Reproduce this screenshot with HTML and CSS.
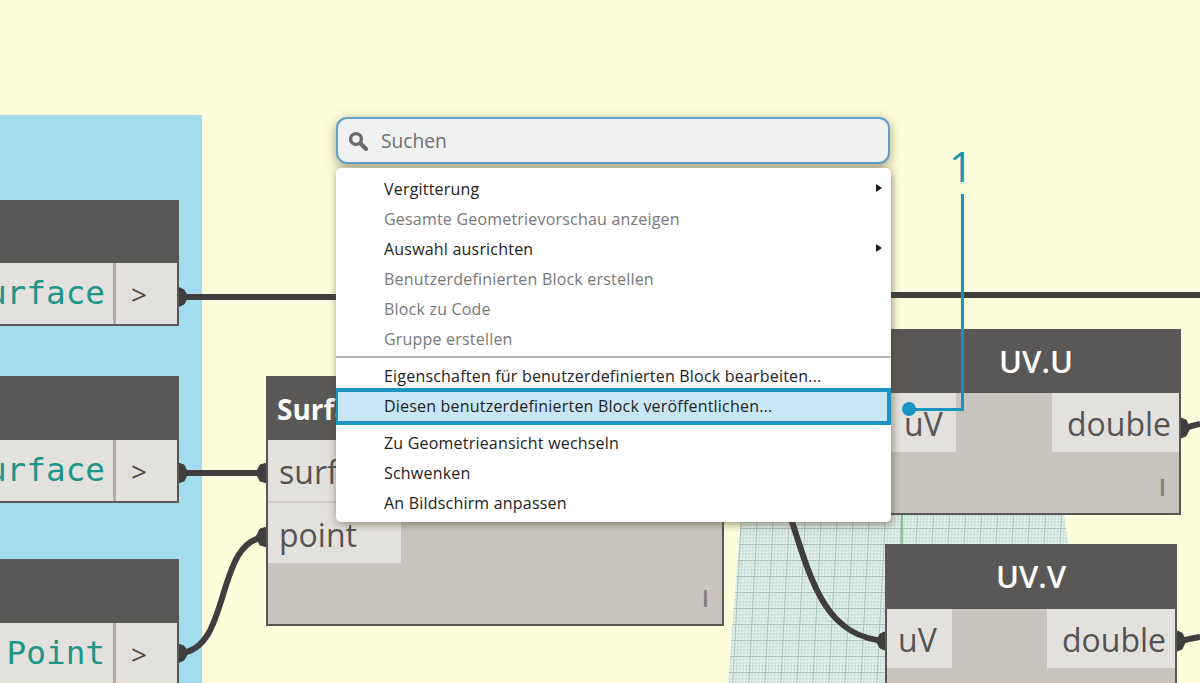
FILE: index.html
```html
<!DOCTYPE html>
<html lang="de">
<head>
<meta charset="utf-8">
<title>Block veröffentlichen</title>
<link rel="stylesheet" href="styles.css">
</head>
<body>
<main class="canvas">
  <div class="group"></div>

  <svg class="layer" width="1200" height="683" viewBox="0 0 1200 683" aria-hidden="true">
    <defs>
      <pattern id="fine" width="3.200" height="3.200" patternUnits="userSpaceOnUse">
        <rect width="3.200" height="3.200" fill="#f0f7ec"/>
        <path d="M0 .5H3.200M.5 0V3.200" stroke="#bddad9" stroke-width="1"/>
      </pattern>
      <pattern id="coarse" width="16" height="16" patternUnits="userSpaceOnUse" patternTransform="skewX(-3)">
        <rect width="16" height="16" fill="url(#fine)"/>
        <path d="M0 .5H16M.5 0V16" stroke="#a6bfbf" stroke-width="1"/>
      </pattern>
    </defs>
    <polygon points="741,515 1064,515 1069,548 1100,683 728,683" fill="url(#coarse)"/>
    <path d="M902 515V544" stroke="#3fa63f" stroke-width="1"/>
    <g class="wire">
      <path d="M180 297H340M885 295H1200"/>
      <path d="M180 473H266"/>
      <path d="M180 653C232 650 214 540 266 537"/>
      <path d="M790 515C812 585 826 637 886 641"/>
      <path d="M1181 428C1188 428 1194 425 1200 424"/>
      <path d="M1177 641C1184 641 1192 638 1200 637"/>
    </g>
    <g class="pin">
      <path d="M178 287 184 290 188 297 184 304 178 307Z"/>
      <path d="M178 463 184 465 188 473 184 481 178 483Z"/>
      <path d="M178 644 184 646 188 653 184 660 178 663Z"/>
      <path d="M267 463 260 465 256 473 260 481 267 483Z"/>
      <path d="M267 527 260 529 256 537 260 545 267 547Z"/>
      <path d="M887 631 880 634 876 641 880 648 887 651Z"/>
      <path d="M1181 418 1186 420 1190 428 1186 436 1181 438Z"/>
      <path d="M1177 631 1182 633 1186 641 1182 649 1177 651Z"/>
    </g>
  </svg>

  <section class="node src src-a">
    <header class="node-head"></header>
    <div class="src-row"><span class="src-name">Surface</span><span class="src-arrow">&gt;</span></div>
  </section>
  <section class="node src src-b">
    <header class="node-head"></header>
    <div class="src-row"><span class="src-name">Surface</span><span class="src-arrow">&gt;</span></div>
  </section>
  <section class="node src src-c">
    <header class="node-head"></header>
    <div class="src-row"><span class="src-name">Point</span><span class="src-arrow">&gt;</span></div>
  </section>

  <section class="node surface">
    <header class="node-head">Surface.UVParameterAtPoint</header>
    <div class="ports">
      <div class="port port-in port-wide port-line">surface</div>
      <div class="port port-in port-wide">point</div>
    </div>
    <div class="lacing">I</div>
  </section>

  <section class="node uv uv-u">
    <header class="node-head">UV.U</header>
    <div class="uv-row"><span class="port port-in">uV</span><span class="port port-out">double</span></div>
    <div class="lacing">I</div>
  </section>
  <section class="node uv uv-v">
    <header class="node-head">UV.V</header>
    <div class="uv-row"><span class="port port-in">uV</span><span class="port port-out">double</span></div>
  </section>

  <div class="popup">
    <div class="search">
      <svg class="search-icon" width="20" height="20" viewBox="0 0 20 20" aria-hidden="true">
        <circle cx="8" cy="8" r="5.400" fill="none" stroke="#6a6a6a" stroke-width="3.400"/>
        <path d="M12.500 12.500 18 18" stroke="#6a6a6a" stroke-width="4.200" stroke-linecap="round"/>
      </svg>
      <span class="search-text">Suchen</span>
    </div>
    <ul class="menu">
      <li class="item has-sub">Vergitterung</li>
      <li class="item off">Gesamte Geometrievorschau anzeigen</li>
      <li class="item has-sub">Auswahl ausrichten</li>
      <li class="item off">Benutzerdefinierten Block erstellen</li>
      <li class="item off">Block zu Code</li>
      <li class="item off">Gruppe erstellen</li>
      <li class="sep"></li>
      <li class="item">Eigenschaften für benutzerdefinierten Block bearbeiten...</li>
      <li class="item active">Diesen benutzerdefinierten Block veröffentlichen...</li>
      <li class="item after-active">Zu Geometrieansicht wechseln</li>
      <li class="item">Schwenken</li>
      <li class="item">An Bildschirm anpassen</li>
    </ul>
  </div>

  <div class="callout-num">1</div>
  <svg class="layer top" width="1200" height="683" viewBox="0 0 1200 683" aria-hidden="true">
    <path d="M962.500 194V409.500H909" fill="none" stroke="#1a94c0" stroke-width="3"/>
    <circle cx="909" cy="409" r="7" fill="#1a94c0"/>
  </svg>
</main>
</body>
</html>
```

FILE: styles.css
```css
* { box-sizing: border-box; }
html, body { margin: 0; padding: 0; }
body { background: #fffedc; font-family: "Open Sans", sans-serif; }

.canvas { position: relative; width: 1200px; height: 683px; overflow: hidden; background: #fffedc; }

.group { position: absolute; left: 0; top: 115px; width: 202px; height: 568px; background: #a3dcef; }

.layer { position: absolute; left: 0; top: 0; display: block; }
.wire path { fill: none; stroke: #3f3d3d; stroke-width: 6; }
.pin path { fill: #3f3d3d; stroke: #3f3d3d; stroke-width: 1; stroke-linejoin: round; }

.node { position: absolute; display: flex; flex-direction: column; background: #c9c5be; border: 2px solid #5a5857; border-top: 0; }
.node-head { background: #5a5857; color: #fff; font-weight: 600; font-size: 31px; text-align: center; flex: none; margin: 0 -2px; white-space: nowrap; overflow: hidden; }

/* Source nodes on the left, cut by the edge of the canvas */
.src { left: -100px; width: 279px; }
.src-a { top: 200px; height: 126px; }
.src-b { top: 376px; height: 127px; }
.src-c { top: 559px; height: 140px; }
.src .node-head { height: 64px; }
.src-a .node-head { height: 63px; }
.src-row { flex: 1; display: flex; background: #e3e1dd; }
.src-name { flex: 1; text-align: right; padding: 8px 8px 0 0; font: 32.700px/44px "DejaVu Sans Mono", monospace; color: #1f9488; border-right: 3px solid #b0ada8; white-space: nowrap; }
.src-arrow { flex: none; width: 61px; padding: 9px 0 0 15px; font: 28px/44px "Open Sans", sans-serif; color: #4a4847; }

/* Surface node */
.surface { left: 266px; top: 376px; width: 458px; height: 250px; }
.surface .node-head { height: 64px; line-height: 67px; font-size: 28px; font-weight: 700; text-align: left; padding-left: 11px; }
.ports { display: flex; flex-direction: column; }
.port { background: #e3e1dd; color: #565352; font-size: 32px; line-height: 44px; display: block; white-space: nowrap; }
.port-wide { width: 133px; height: 60px; padding: 10px 0 0 11px; }
.port-line { height: 63px; border-bottom: 2px solid #cfccc7; }
.lacing { position: absolute; right: 13px; bottom: 14px; font-size: 24px; font-weight: 600; line-height: 24px; color: #857f7a; }

/* UV nodes */
.uv-u { left: 870px; top: 329px; width: 311px; height: 186px; }
.uv-v { left: 885px; top: 544px; width: 292px; height: 160px; }
.uv .node-head { height: 64px; line-height: 64px; }
.uv-v .node-head { height: 65px; }
.uv-u .node-head { padding-left: 21px; }
.uv-row { display: flex; justify-content: space-between; }
.uv-row .port { height: 59px; padding-top: 9px; }
.uv-u .port-in { width: 84px; padding-left: 32px; }
.uv-v .port-in { width: 65px; padding-left: 11px; }
.uv-u .port-out { width: 127px; padding-left: 15px; }
.uv-v .port-out { width: 128px; padding-left: 15px; }

/* Popup */
.popup { position: absolute; left: 336px; top: 117px; width: 555px; }
.search { height: 47px; width: 554px; display: flex; align-items: center; gap: 13px; padding-left: 10px; background: #f0f2f2; border: 2px solid #5f9fce; border-radius: 11px; box-shadow: 0 3px 12px rgba(90, 80, 50, .55); }
.search-icon { flex: none; }
.search-text { font-size: 19.200px; color: #6f6f6f; }
.menu { list-style: none; margin: 4px 0 0; padding: 6px 0 4px; background: #fff; border-radius: 5px; box-shadow: 1px 2px 10px rgba(80, 70, 40, .6); }
.item { position: relative; height: 30px; line-height: 30px; padding-left: 48px; font-size: 16px; letter-spacing: .2px; color: #222; white-space: nowrap; }
.off { color: #787878; }
.has-sub::after { content: ""; position: absolute; right: 9px; top: 10px; border-left: 6px solid #1a1a1a; border-top: 4.500px solid transparent; border-bottom: 4.500px solid transparent; }
.sep { height: 2px; margin: 2px 0 3px; background: #b5b5b3; }
.active { height: 37px; margin-top: -3px; line-height: 29px; padding-left: 46px; background: #c9e6f6; border: 4px solid #1a94c4; border-left-width: 2px; }
.after-active { margin-top: 3px; }

.callout-num { position: absolute; left: 949px; top: 141px; font-size: 42px; line-height: 50px; font-weight: 400; color: #1a94b4; }
.top { pointer-events: none; }
```
